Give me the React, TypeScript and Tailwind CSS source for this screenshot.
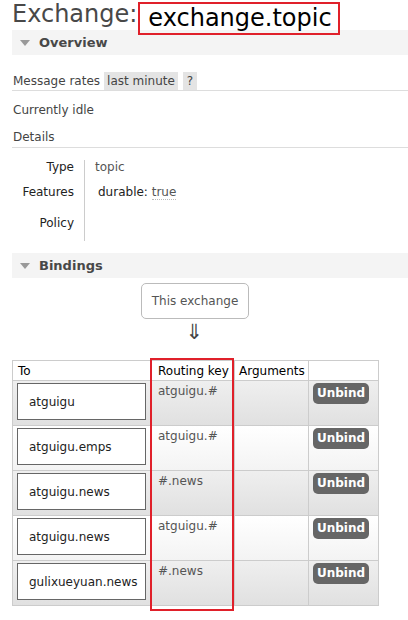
import React from 'react';

interface Binding {
  to: string;
  key: string;
}

const bindings: Binding[] = [
  { to: 'atguigu', key: 'atguigu.#' },
  { to: 'atguigu.emps', key: 'atguigu.#' },
  { to: 'atguigu.news', key: '#.news' },
  { to: 'atguigu.news', key: 'atguigu.#' },
  { to: 'gulixueyuan.news', key: '#.news' },
];

function SectionBar({ title }: { title: string }) {
  return (
    <div className="flex items-center h-[25px] bg-[#f4f4f4] pl-[8px]">
      <span className="w-0 h-0 border-l-[5px] border-r-[5px] border-t-[6px] border-l-transparent border-r-transparent border-t-[#999]" />
      <span className="ml-[9px] text-[13px] font-bold text-[#484848]">{title}</span>
    </div>
  );
}

export default function App() {
  return (
    <div className="w-[408px] h-[620px] overflow-hidden bg-white pl-3 font-['DejaVu_Sans',sans-serif] text-[12px] text-[#444]">
      {/* title */}
      <div className="flex items-start h-[30px]">
        <span className="text-[24px] leading-[30px] text-[#484848] -mt-[1px]">Exchange:</span>
        <span className="relative z-10 ml-[1px] mt-[2px] h-[33px] w-[202px] border-2 border-[#e0202a] pl-[8px] text-[24px] leading-[28px] text-black">
          exchange.topic
        </span>
      </div>

      <SectionBar title="Overview" />

      <div className="mt-[16px] flex items-center h-[20px] border-b border-[#ddd]">
        <span className="pl-[1px]">Message rates</span>
        <span className="ml-[4px] bg-[#e4e4e4] px-[3px] h-[18px] leading-[18px]">last minute</span>
        <span className="ml-[5px] bg-[#e4e4e4] px-[4px] h-[18px] leading-[18px]">?</span>
      </div>

      <div className="mt-[11px] pl-[1px] leading-[16px]">Currently idle</div>
      <div className="mt-[11px] pl-[1px] leading-[16px] pb-[2px] border-b border-[#ddd]">Details</div>

      {/* details */}
      <div className="flex mt-[11px]">
        <div className="w-[62px] text-right text-[#222] leading-[16px]">
          <div>Type</div>
          <div className="mt-[9px]">Features</div>
          <div className="mt-[15px]">Policy</div>
        </div>
        <div className="ml-[10px] mt-[1px] h-[81px] border-l border-[#ccc]" />
        <div className="leading-[16px]">
          <div className="ml-[10px] text-[#555]">topic</div>
          <div className="mt-[9px] ml-[13px] text-[#222]">
            durable: <span className="text-[#555] border-b border-dotted border-[#bbb]">true</span>
          </div>
        </div>
      </div>

      <div className="mt-[12px]">
        <SectionBar title="Bindings" />
      </div>

      {/* this exchange */}
      <div className="flex flex-col items-center w-[366px]">
        <div className="mt-[5px] w-[108px] h-[36px] border border-[#bbb] rounded-[5px] flex items-center justify-center text-[#555]">
          This exchange
        </div>
        <div className="h-[26px] text-[21px] leading-[26px] text-[#444] -ml-[2px]">⇓</div>
      </div>

      {/* bindings table */}
      <div className="relative mt-[15px] w-[366px]">
        <table className="w-[366px] border-collapse table-fixed border border-[#ccc]">
          <colgroup>
            <col className="w-[138px]" />
            <col className="w-[84px]" />
            <col className="w-[74px]" />
            <col className="w-[70px]" />
          </colgroup>
          <thead>
            <tr className="h-[20px] bg-white text-black">
              <th className="border border-[#ccc] text-left font-normal pl-[5px] leading-[18px]">To</th>
              <th className="border border-[#ccc] text-left font-normal pl-[7px] leading-[18px]">Routing key</th>
              <th className="border border-[#ccc] text-left font-normal pl-[4px] leading-[18px]">Arguments</th>
              <th className="border border-[#ccc]" />
            </tr>
          </thead>
          <tbody>
            {bindings.map((b, i) => (
              <tr
                key={i}
                className={
                  i % 2 === 0
                    ? 'h-[45px] bg-linear-to-b from-[#efefef] to-[#e0e0e0]'
                    : 'h-[45px] bg-linear-to-b from-[#ffffff] to-[#f3f3f3]'
                }
              >
                <td className="border border-[#ccc] p-0 align-top">
                  <div className="mx-[4px] mt-[2px] h-[37px] bg-white border border-[#666] flex items-center pl-[11px] text-[#222]">
                    {b.to}
                  </div>
                </td>
                <td className="border border-[#ccc] align-top pl-[7px] pt-[2px] leading-[16px] text-[#555]">{b.key}</td>
                <td className="border border-[#ccc]" />
                <td className="border border-[#ccc] align-top pt-[2px] pl-[4px]">
                  <button className="w-[56px] h-[21px] rounded-[5px] bg-[#666] text-white font-bold text-[12px] leading-[21px]">
                    Unbind
                  </button>
                </td>
              </tr>
            ))}
          </tbody>
        </table>
        <div className="absolute left-[138px] top-[-2px] w-[84px] h-[253px] border-2 border-[#e0202a] pointer-events-none" />
      </div>
    </div>
  );
}
